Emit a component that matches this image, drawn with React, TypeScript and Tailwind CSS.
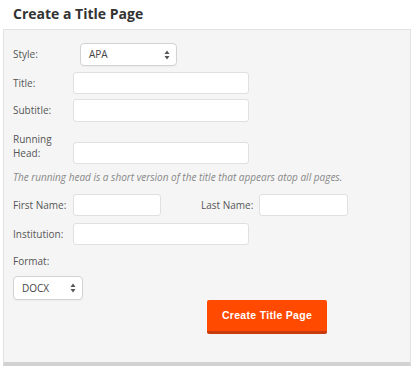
import React from 'react';

const font = { fontFamily: '"Open Sans", "Liberation Sans", sans-serif' };

function Arrows() {
    return (
        <svg width="6" height="10" viewBox="0 0 6 10" className="text-[#555]">
            <path d="M3 0.5 L5.5 4 L0.5 4 Z" fill="currentColor" />
            <path d="M3 9.5 L5.5 6 L0.5 6 Z" fill="currentColor" />
        </svg>
    );
}

function FakeSelect({ value, className }: { value: string; className: string }) {
    return (
        <div
            className={`flex items-center justify-between rounded-[4px] border border-[#d3d3d3] bg-white pl-[8px] pr-[6px] text-[10px] text-[#444] shadow-[0_1px_1px_rgba(0,0,0,0.04)] ${className}`}
        >
            <span>{value}</span>
            <Arrows />
        </div>
    );
}

function TextBox({ className }: { className: string }) {
    return <input type="text" className={`rounded-[3px] border border-[#e0e0e0] bg-white outline-none ${className}`} />;
}

export default function App() {
    return (
        <div className="h-[366px] w-[414px] overflow-hidden bg-white" style={font}>
            <h2 className="ml-[13px] pt-[2px] text-[14px] font-bold leading-[24px] text-[#333]">Create a Title Page</h2>

            <div className="ml-[3px] mt-[3px] h-[337px] w-[408px] border border-b-[4px] border-[#e2e2e2] border-b-[#d2d2d2] bg-[#f5f5f5] px-[9px] pt-[13px] text-[10px] text-[#555]">
                <div className="flex h-[23px] items-center">
                    <span className="w-[67px]">Style:</span>
                    <FakeSelect value="APA" className="h-[23px] w-[97px]" />
                </div>

                <div className="mt-[6px] flex h-[22px] items-center">
                    <span className="w-[60px]">Title:</span>
                    <TextBox className="h-[22px] w-[176px]" />
                </div>

                <div className="mt-[5px] flex h-[23px] items-center">
                    <span className="w-[60px]">Subtitle:</span>
                    <TextBox className="h-[23px] w-[176px]" />
                </div>

                <div className="mt-[10px] flex items-end">
                    <span className="w-[60px] pb-[4px] leading-[14px]">
                        Running
                        <br />
                        Head:
                    </span>
                    <TextBox className="h-[22px] w-[176px]" />
                </div>

                <p className="mt-[6px] text-[10px] italic leading-[14px] text-[#888]">
                    The running head is a short version of the title that appears atop all pages.
                </p>

                <div className="mt-[10px] flex h-[22px] items-center">
                    <span className="w-[60px]">First Name:</span>
                    <TextBox className="h-[22px] w-[88px]" />
                    <span className="ml-[40px] w-[58px]">Last Name:</span>
                    <TextBox className="h-[22px] w-[89px]" />
                </div>

                <div className="mt-[7px] flex h-[22px] items-center">
                    <span className="w-[60px]">Institution:</span>
                    <TextBox className="h-[22px] w-[176px]" />
                </div>

                <div className="mt-[9px] leading-[14px]">Format:</div>

                <div className="relative mt-[8px] h-[58px]">
                    <FakeSelect value="DOCX" className="h-[24px] w-[70px]" />
                    <button className="absolute left-[194px] top-[24px] h-[34px] w-[120px] rounded-[2px] border-b-[3px] border-[#c93a0c] bg-[#ff4a00] text-[10.5px] font-bold tracking-[0.3px] text-white" style={{ fontFamily: '"Liberation Sans", Arial, sans-serif' }}>
                        Create Title Page
                    </button>
                </div>
            </div>
        </div>
    );
}
